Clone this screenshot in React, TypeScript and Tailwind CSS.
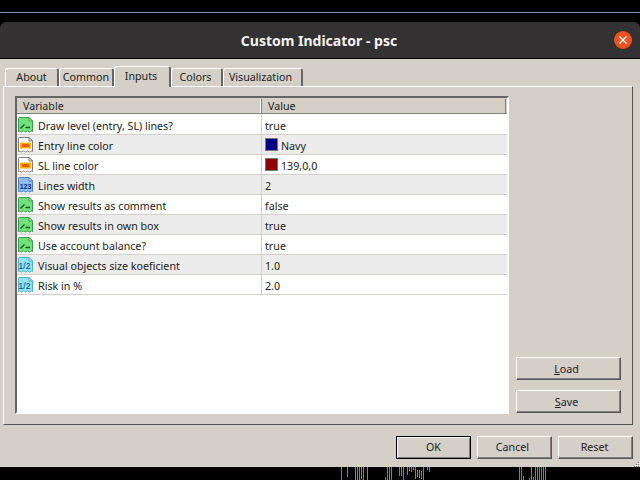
const FONT = "font-['Noto_Sans','Liberation_Sans',sans-serif]"

const iconColors = {
  bool: { fill: "#74e07c", stroke: "#35a043", fold: "#d8f8da" },
  color: { fill: "#ffffff", stroke: "#7c7c7c", fold: "#f0f0f0" },
  int: { fill: "#8dbcf0", stroke: "#4a80c0", fold: "#dcebfb" },
  dbl: { fill: "#8ee4f2", stroke: "#48aec4", fold: "#dcf7fb" },
}

function PageIcon({ kind }: { kind: keyof typeof iconColors }) {
  const c = iconColors[kind]
  return (
    <svg width="17" height="17" viewBox="0 0 17 17" className="shrink-0">
      <path
        d="M2.500 1.500H12L15.500 5V15.500Q14.500 14.500 13.500 15.500T11.500 15.500T9.500 15.500T7.500 15.500T5.500 15.500T3.500 15.500Q2.500 15 1.500 15.500V2.500Q1.500 1.500 2.500 1.500Z"
        fill={c.fill}
        stroke={c.stroke}
      />
      <path d="M12 1.500V5H15.500Z" fill={c.fold} stroke={c.stroke} />
      {kind === "bool" && (
        <path d="M3.500 12.500L7.500 8.500M8.500 11.500H13" fill="none" stroke="#0b5a14" strokeWidth="1.300" />
      )}
      {kind === "color" && (
        <>
          <rect x="3" y="6.500" width="11" height="6" fill="#ffb000" />
          <rect x="5" y="8" width="7" height="3" fill="#f25a00" />
        </>
      )}
      {kind === "int" && (
        <text x="8.500" y="12.500" textAnchor="middle" fontSize="7" fontWeight="700" fill="#0c2c70" fontFamily="Liberation Sans, sans-serif">
          123
        </text>
      )}
      {kind === "dbl" && (
        <text x="7.500" y="12.500" textAnchor="middle" fontSize="8.500" fill="#0c3c80" fontFamily="Liberation Sans, sans-serif">
          1/2
        </text>
      )}
    </svg>
  )
}

const rows = [
  { name: "Draw level (entry, SL) lines?", value: "true", icon: "bool" },
  { name: "Entry line color", value: "Navy", icon: "color", swatch: "bg-[#000080]" },
  { name: "SL line color", value: "139,0,0", icon: "color", swatch: "bg-[#8b0000]" },
  { name: "Lines width", value: "2", icon: "int" },
  { name: "Show results as comment", value: "false", icon: "bool" },
  { name: "Show results in own box", value: "true", icon: "bool" },
  { name: "Use account balance?", value: "true", icon: "bool" },
  { name: "Visual objects size koeficient", value: "1.0", icon: "dbl" },
  { name: "Risk in %", value: "2.0", icon: "dbl" },
] as const

const tabs = ["About", "Common", "Inputs", "Colors", "Visualization"]
const tabWidths = ["w-[54px]", "w-[55px]", "w-[57px] pr-[2px]", "w-[52px] pr-[2px]", "w-[80px] pr-[4px]"]

// green candles of the chart behind the dialog: x, top, bottom
const bars = [
  [341, 0, 13], [347, 0, 10], [355, 0, 13], [357, 0, 13], [359, 0, 13], [361, 0, 12], [363, 0, 13], [367, 0, 13],
  [385, 10, 13], [387, 0, 13], [389, 0, 13], [391, 0, 13], [399, 0, 9], [401, 0, 9], [403, 0, 13], [407, 0, 8],
  [409, 0, 4], [411, 0, 5], [413, 0, 3], [415, 0, 12], [417, 3, 10], [419, 3, 11], [421, 4, 12], [423, 0, 13],
  [427, 0, 3], [429, 0, 5], [519, 0, 13], [521, 0, 13], [523, 9, 13], [529, 11, 13], [531, 0, 13], [533, 10, 13],
  [535, 0, 13], [537, 0, 13], [539, 0, 13], [541, 0, 13], [543, 0, 13], [545, 0, 13],
]

function WinButton({ label, under, wide, def, pad }: { label: string; under?: boolean; wide?: boolean; def?: boolean; pad?: string }) {
  return (
    <button
      className={`flex h-[23px] items-center justify-center border bg-[#d4d0c8] text-[10.7px] text-[#222222] ${
        wide ? "w-[105px]" : "w-[75px]"
      } ${
        def
          ? "border-black shadow-[inset_1px_1px_0_#ffffff,inset_-1px_-1px_0_#808080]"
          : "border-t-white border-l-white border-r-[#555555] border-b-[#555555] shadow-[inset_-1px_-1px_0_#808080]"
      } ${pad ?? ""}`}
    >
      {under ? (
        <>
          <span className="underline">{label[0]}</span>
          {label.slice(1)}
        </>
      ) : (
        label
      )}
    </button>
  )
}

export default function App() {
  return (
    <div className={`flex h-[480px] w-[640px] flex-col overflow-hidden bg-black ${FONT}`}>
      <div className="h-[12px]" />
      <div className="h-px bg-[#7d90a8]" />
      <div className="h-[9px]" />

      {/* Title bar */}
      <div className="relative flex h-[37px] items-center justify-center rounded-t-[6px] border-b border-black bg-[#333132] pr-[2px]">
        <span className="text-[14px] font-bold text-[#f2f2f2]">Custom Indicator - psc</span>
        <div className="absolute right-[8px] top-[9px] flex h-[18px] w-[18px] items-center justify-center rounded-full bg-[#ea5420]">
          <svg width="10" height="10" viewBox="0 0 10 10">
            <path d="M1.500 1.500L8.500 8.500M8.500 1.500L1.500 8.500" stroke="#ffffff" strokeWidth="1.300" />
          </svg>
        </div>
      </div>

      {/* Dialog body */}
      <div className="relative flex h-[408px] shrink-0 flex-col bg-[#d4d0c8]">
        {/* Tab strip */}
        <div className="flex h-[27px] shrink-0 items-end pl-[5px]">
          {tabs.map((t, i) => {
            const active = t === "Inputs"
            return (
              <div
                key={t}
                className={`relative flex items-center justify-center rounded-t-[3px] border-l border-t border-r-2 border-l-white border-t-white border-r-[#666666] text-[10.7px] text-[#222222] ${tabWidths[i]} ${
                  active ? "z-10 -mb-px h-[21px] bg-[#d4d0c8] pb-[2px]" : "h-[18px]"
                }`}
              >
                {t}
              </div>
            )
          })}
        </div>

        {/* Tab panel */}
        <div className="ml-[3px] flex h-[339px] w-[630px] shrink-0 gap-[7px] border border-t-white border-l-white border-r-[#555555] border-b-[#555555] pl-[11px] pt-[9px]">
          <div className="h-[318px] w-[494px] border-2 border-t-[#666666] border-l-[#666666] border-r-white border-b-white bg-white">
            {/* Header */}
            <div className="mb-px flex h-[16px] border-b border-[#808080] bg-[#d4d0c8] pt-px text-[10.7px] leading-[14px] text-[#222222]">
              <div className="w-[245px] border-r border-[#808080] pl-[6px] shadow-[inset_-1px_0_0_#ffffff]">Variable</div>
              <div className="w-[244px] border-r border-[#808080] pl-[6px]">Value</div>
            </div>
            {rows.map((r, i) => (
              <div
                key={r.name}
                className={`flex h-[20px] border-b border-[#d4d0c8] text-[10.7px] text-[#222222] ${
                  i % 2 === 1 ? "bg-[#ececec]" : "bg-white"
                }`}
              >
                <div className="flex w-[245px] items-center gap-[4px] border-r border-[#d4d0c8]">
                  <PageIcon kind={r.icon} />
                  <span className="whitespace-nowrap pt-[4px]">{r.name}</span>
                </div>
                <div className="flex items-center gap-[3px] pl-[3px]">
                  {"swatch" in r && <span className={`h-[13px] w-[13px] border border-[#777777] ${r.swatch}`} />}
                  <span className="pt-[4px]">{r.value}</span>
                </div>
              </div>
            ))}
          </div>

          {/* Load / Save */}
          <div className="flex h-[328px] flex-col justify-end gap-[10px] pb-[11px]">
            <WinButton label="Load" under wide pad="pr-[4px] pt-[2px]" />
            <WinButton label="Save" under wide pad="pr-[4px] pt-[2px]" />
          </div>
        </div>

        {/* Footer buttons */}
        <div className="flex flex-1 items-center justify-end gap-[6px] pr-[7px] pt-[2px]">
          <WinButton label="OK" def />
          <WinButton label="Cancel" pad="pr-[4px]" />
          <WinButton label="Reset" pad="pr-[2px]" />
        </div>

        {/* Resize grip */}
        <svg width="6" height="6" viewBox="0 0 6 6" className="absolute bottom-0 right-0">
          <path d="M5 0h1v1h-1zM3 2h1v1h-1zM5 2h1v1h-1zM1 4h1v1h-1zM3 4h1v1h-1zM5 4h1v1h-1z" fill="#ffffff" />
          <path d="M4 1h1v1h-1zM2 3h1v1h-1zM4 3h1v1h-1zM0 5h1v1h-1zM2 5h1v1h-1zM4 5h1v1h-1z" fill="#777777" />
        </svg>
      </div>

      {/* Chart remains under the dialog */}
      <svg width="640" height="13" viewBox="0 0 640 13" className="shrink-0">
        {bars.map(([x, top, bottom]) => (
          <rect key={x} x={x} y={top} width="1" height={bottom - top} fill="#22c422" />
        ))}
      </svg>
    </div>
  )
}
